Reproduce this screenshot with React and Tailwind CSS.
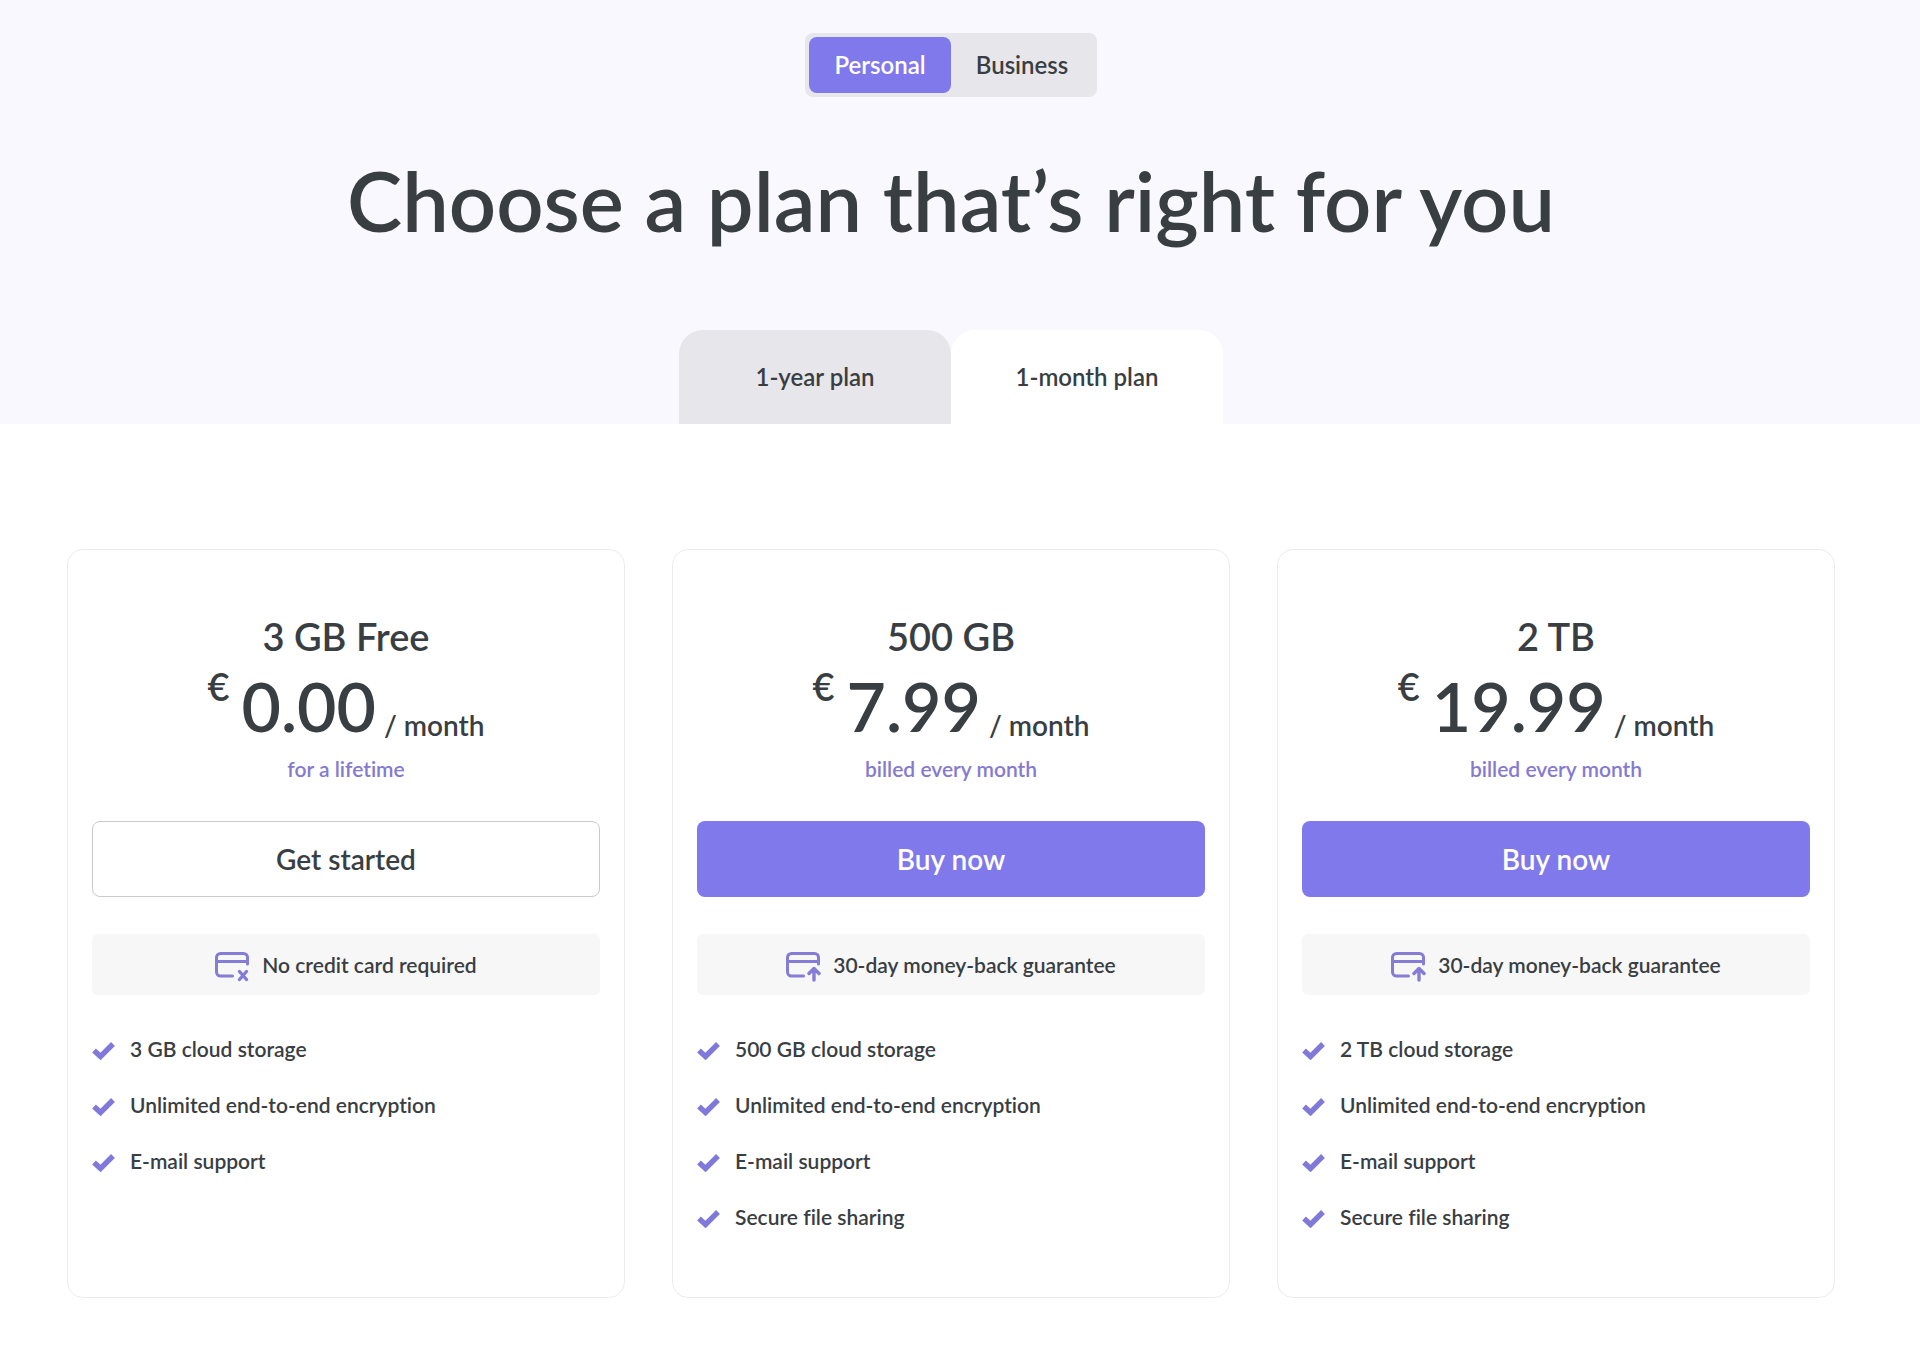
import React, { useState } from 'react';
import clsx from 'clsx';

const PLANS = [
  {
    id: 'free',
    name: '3 GB Free',
    price: '0.00',
    billing: 'for a lifetime',
    cta: 'Get started',
    primary: false,
    note: 'No credit card required',
    noteIcon: 'x',
    features: ['3 GB cloud storage', 'Unlimited end-to-end encryption', 'E-mail support'],
  },
  {
    id: '500gb',
    name: '500 GB',
    price: '7.99',
    billing: 'billed every month',
    cta: 'Buy now',
    primary: true,
    note: '30-day money-back guarantee',
    noteIcon: 'up',
    features: ['500 GB cloud storage', 'Unlimited end-to-end encryption', 'E-mail support', 'Secure file sharing'],
  },
  {
    id: '2tb',
    name: '2 TB',
    price: '19.99',
    billing: 'billed every month',
    cta: 'Buy now',
    primary: true,
    note: '30-day money-back guarantee',
    noteIcon: 'up',
    features: ['2 TB cloud storage', 'Unlimited end-to-end encryption', 'E-mail support', 'Secure file sharing'],
  },
];

function CardIcon({ type }) {
  return (
    <svg
      width="35"
      height="30"
      viewBox="0 0 35 30"
      fill="none"
      stroke="#857cd6"
      strokeWidth="3"
      strokeLinecap="round"
      strokeLinejoin="round"
      className="mt-1 shrink-0"
      aria-hidden="true"
    >
      <path d="M17.5 24H5.5a4 4 0 0 1-4-4V5.5a4 4 0 0 1 4-4h23a4 4 0 0 1 4 4V12" />
      <path d="M1.5 9.5h31" />
      {type === 'x' ? (
        <path d="M24.5 19.5l7 8M31.5 19.5l-7 8" strokeWidth="3.4" />
      ) : (
        <path d="M28 28V17M23 21.5l5-5 5 5" strokeWidth="3.4" />
      )}
    </svg>
  );
}

function Check() {
  return (
    <svg width="23" height="18" viewBox="0 0 23 18" className="mt-1 shrink-0" aria-hidden="true">
      <path d="M2 8.5l6.5 6L21 2" fill="none" stroke="#8079da" strokeWidth="5.4" />
    </svg>
  );
}

function PlanCard({ plan }) {
  return (
    <section className="flex flex-col rounded-2xl border border-[#ececee] px-6 pt-14 pb-16">
      <h2 className="text-center text-[38px] leading-[60px]">{plan.name}</h2>

      <div className="flex h-[78px] justify-center">
        <span className="mr-3 text-[38px] leading-[40px]">€</span>
        <span className="mr-2 text-[68px] leading-[80px]">{plan.price}</span>
        <span className="self-end text-[28px] leading-[38px]">/ month</span>
      </div>

      <p className="mt-[9px] text-center text-[21px] leading-8 text-[#857ad0]">{plan.billing}</p>

      <button
        type="button"
        className={clsx(
          'mt-9 h-[76px] rounded-lg text-[28px]',
          plan.primary ? 'bg-[#7f79ec] text-white' : 'border border-[#cbcbcd] bg-white'
        )}
      >
        {plan.cta}
      </button>

      <div className="mt-[37px] flex h-[61px] items-center justify-center gap-3 rounded-md bg-[#f7f7f8] text-[21px]">
        <CardIcon type={plan.noteIcon} />
        <span>{plan.note}</span>
      </div>

      <ul className="mt-[38px] flex flex-col gap-6 text-[21px] leading-8">
        {plan.features.map((feature) => (
          <li key={feature} className="flex items-center gap-[15px]">
            <Check />
            <span>{feature}</span>
          </li>
        ))}
      </ul>
    </section>
  );
}

export default function App() {
  const [audience, setAudience] = useState('Personal');
  const [period, setPeriod] = useState('1-month plan');

  return (
    <div className="min-h-screen bg-white font-[Lato,sans-serif] font-semibold text-[#393e43] [font-variant-ligatures:none]">
      <header className="flex flex-col items-center bg-[#f9f8ff] pt-[33px] pr-[18px]">
        <div className="flex rounded-lg bg-[#e7e6eb] p-1">
          {['Personal', 'Business'].map((name) => (
            <button
              key={name}
              type="button"
              aria-pressed={audience === name}
              onClick={() => setAudience(name)}
              className={clsx(
                'h-14 w-[142px] rounded-lg text-2xl',
                audience === name && 'bg-[#7f79ec] text-white'
              )}
            >
              {name}
            </button>
          ))}
        </div>

        <h1 className="mt-[51px] text-center text-[83px] leading-[104px]">
          Choose a plan that’s right for you
        </h1>

        <div className="mt-[78px] flex">
          {['1-year plan', '1-month plan'].map((name) => (
            <button
              key={name}
              type="button"
              aria-pressed={period === name}
              onClick={() => setPeriod(name)}
              className={clsx(
                'h-[94px] w-[272px] rounded-t-3xl text-2xl',
                period === name ? 'bg-white' : 'bg-[#e7e6eb]'
              )}
            >
              {name}
            </button>
          ))}
        </div>
      </header>

      <main className="grid grid-cols-3 gap-[47px] pt-[125px] pr-[85px] pb-12 pl-[67px]">
        {PLANS.map((plan) => (
          <PlanCard key={plan.id} plan={plan} />
        ))}
      </main>
    </div>
  );
}
